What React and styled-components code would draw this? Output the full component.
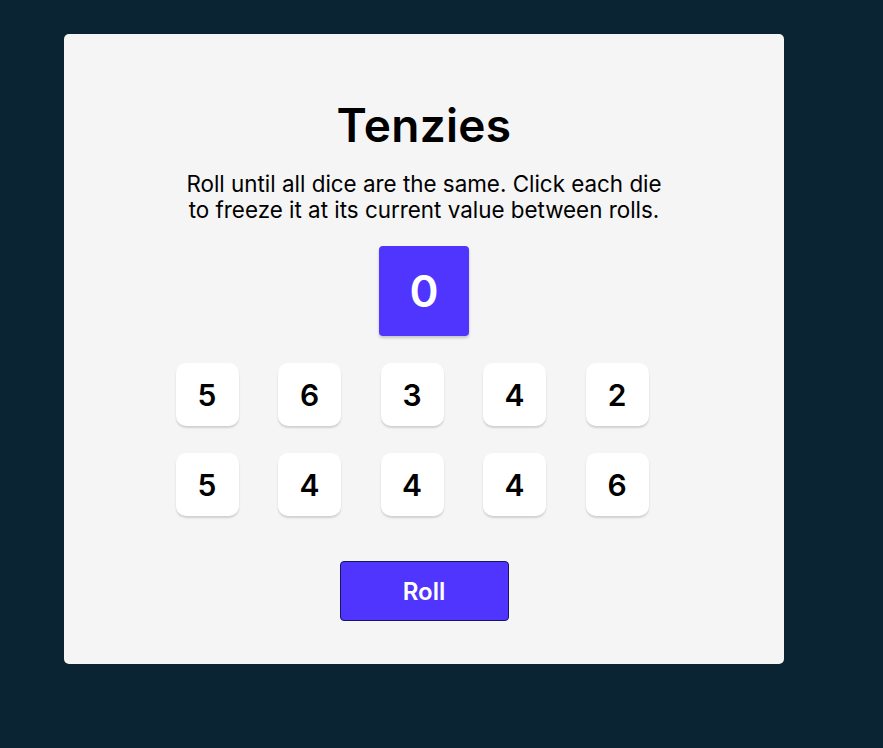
import React from "react"
import styled, { createGlobalStyle } from "styled-components"

const GlobalStyle = createGlobalStyle`
	body {
		margin: 0;
		background-color: #0b2434;
		font-family: Inter, "Noto Sans", sans-serif;
	}
`

const Page = styled.div`
	padding: 34px 64px;
`

const Card = styled.main`
	width: 720px;
	height: 630px;
	box-sizing: border-box;
	background-color: #f5f5f5;
	border-radius: 5px;
	display: flex;
	flex-direction: column;
	align-items: center;
	padding-top: 68px;
`

const Title = styled.h1`
	margin: 0;
	font-size: 46px;
	line-height: 1;
	font-weight: 600;
	letter-spacing: 0.3px;
	color: #000;
`

const Intro = styled.p`
	margin: 23px 0 0;
	font-size: 22.4px;
	line-height: 26px;
	font-weight: 400;
	text-align: center;
	width: 490px;
	color: #000;
`

const Counter = styled.div`
	margin-top: 23px;
	width: 90px;
	height: 90px;
	background-color: #5035ff;
	border-radius: 4px;
	box-shadow: 0 2px 3px rgba(0, 0, 0, 0.2);
	display: flex;
	align-items: center;
	justify-content: center;
	color: #fff;
	font-size: 44px;
	font-weight: 600;
`

const DiceGrid = styled.div`
	margin-top: 27px;
	margin-right: 24px;
	display: grid;
	grid-template-columns: repeat(5, 63px);
	column-gap: 39.5px;
	row-gap: 27px;
`

const Die = styled.button`
	width: 63px;
	height: 63px;
	border: none;
	border-radius: 10px;
	background-color: ${props => (props.held ? "#59e391" : "#fff")};
	box-shadow: 0 2px 2px rgba(0, 0, 0, 0.15);
	font-family: Inter, "Noto Sans", sans-serif;
	font-size: 30px;
	font-weight: 600;
	color: #000;
	padding: 0;
	cursor: pointer;
`

const RollButton = styled.button`
	margin-top: 45px;
	width: 169px;
	height: 60px;
	background-color: #5035ff;
	border: 1px solid #1a1560;
	border-radius: 4px;
	color: #fff;
	font-family: Inter, "Noto Sans", sans-serif;
	font-size: 24px;
	font-weight: 600;
	cursor: pointer;
`

const dice = [5, 6, 3, 4, 2, 5, 4, 4, 4, 6]

export default function App() {
	return (
		<>
			<GlobalStyle />
			<Page>
				<Card>
					<Title>Tenzies</Title>
					<Intro>
						Roll until all dice are the same. Click each die to
						freeze it at its current value between rolls.
					</Intro>
					<Counter>0</Counter>
					<DiceGrid>
						{dice.map((value, i) => (
							<Die key={i}>{value}</Die>
						))}
					</DiceGrid>
					<RollButton>Roll</RollButton>
				</Card>
			</Page>
		</>
	)
}
